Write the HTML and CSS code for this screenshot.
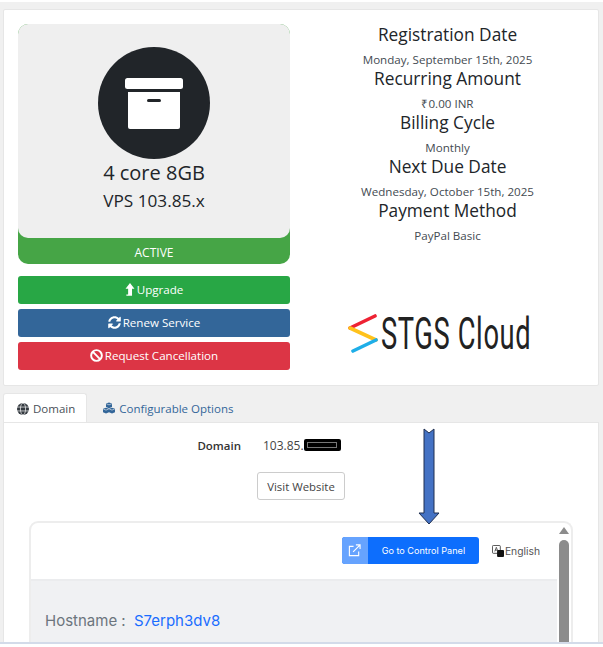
FILE: index.html
```html
<!DOCTYPE html>
<html lang="en">
<head>
<meta charset="utf-8">
<title>Service details</title>
<link rel="stylesheet" href="styles.css">
</head>
<body>
<div class="page">
  <div class="main">
    <section class="card">
      <div class="left">
        <div class="product">
          <div class="product-box">
            <div class="circle">
              <svg class="box-icon" viewBox="0 0 58 51" aria-hidden="true">
                <rect x="0" y="0" width="58" height="11" rx="2.5" fill="#fff"/>
                <path d="M3 14h52v35a2 2 0 0 1-2 2H5a2 2 0 0 1-2-2z" fill="#fff"/>
                <rect x="22" y="21" width="14" height="3" rx="1.5" fill="#212529"/>
              </svg>
            </div>
            <h3 class="product-name">4 core 8GB</h3>
            <h4 class="product-group">VPS 103.85.x</h4>
          </div>
          <div class="status">ACTIVE</div>
        </div>
        <div class="actions">
          <a class="btn btn-green">
            <svg class="ico ico-narrow" viewBox="1 0 11 16" aria-hidden="true"><path d="M6.500 0L12 7H9v8.800H2V14.200h2.200V7H1z" fill="#fff"/></svg>
            Upgrade
          </a>
          <a class="btn btn-blue">
            <svg class="ico" viewBox="0 0 512 512" aria-hidden="true"><path fill="#fff" d="M370.72 133.28C339.458 104.008 298.888 87.962 255.848 88c-77.458.068-144.328 53.178-162.791 126.85-1.344 5.363-6.122 9.15-11.651 9.15H24.103c-7.498 0-13.194-6.807-11.807-14.176C33.933 94.924 134.813 8 256 8c66.448 0 126.791 26.136 171.315 68.685L463.03 40.97C478.149 25.851 504 36.559 504 57.941V192c0 13.255-10.745 24-24 24H345.941c-21.382 0-32.09-25.851-16.971-40.971l41.75-41.749zM32 296h134.059c21.382 0 32.09 25.851 16.971 40.971l-41.75 41.75c31.262 29.273 71.835 45.319 114.876 45.28 77.418-.07 144.315-53.144 162.787-126.849 1.344-5.363 6.122-9.15 11.651-9.15h57.304c7.498 0 13.194 6.807 11.807 14.176C478.067 417.076 377.187 504 256 504c-66.448 0-126.791-26.136-171.315-68.685L48.97 471.03C33.851 486.149 8 475.441 8 454.059V320c0-13.255 10.745-24 24-24z"/></svg>
            Renew Service
          </a>
          <a class="btn btn-red">
            <svg class="ico" viewBox="0 0 16 16" aria-hidden="true"><circle cx="8" cy="8" r="6.600" fill="none" stroke="#fff" stroke-width="2.400"/><path d="M3.600 3.600l8.800 8.800" stroke="#fff" stroke-width="2.400"/></svg>
            Request Cancellation
          </a>
        </div>
      </div>
      <div class="right">
        <div class="fact"><h4>Registration Date</h4><p>Monday, September 15th, 2025</p></div>
        <div class="fact"><h4>Recurring Amount</h4><p>₹0.00 INR</p></div>
        <div class="fact"><h4>Billing Cycle</h4><p>Monthly</p></div>
        <div class="fact"><h4>Next Due Date</h4><p>Wednesday, October 15th, 2025</p></div>
        <div class="fact"><h4>Payment Method</h4><p>PayPal Basic</p></div>
        <div class="logo">
          <svg class="logo-mark" viewBox="0 0 30 40" aria-hidden="true">
            <path d="M2 14L27 2" stroke="#ee2233" stroke-width="3.600" stroke-linecap="round"/>
            <path d="M2 14L28 26" stroke="#ffc21c" stroke-width="3.600" stroke-linecap="round"/>
            <path d="M28 26L5 37" stroke="#1eaee8" stroke-width="3.600" stroke-linecap="round"/>
          </svg>
          <span class="logo-text">STGS Cloud</span>
        </div>
      </div>
    </section>

    <nav class="tabs">
      <a class="tab tab-active">
        <svg class="tab-ico" viewBox="0 0 16 16" aria-hidden="true"><circle cx="8" cy="8" r="8" fill="#343a40"/><g fill="none" stroke="#fff" stroke-width=".9"><ellipse cx="8" cy="8" rx="3.400" ry="8"/><path d="M0 5.400h16M0 10.600h16"/></g></svg>
        Domain
      </a>
      <a class="tab tab-options">
        <svg class="tab-ico" viewBox="0 0 16 16" aria-hidden="true"><g fill="#336699"><path d="M8 .5l4 1.500v4.600L8 8.200 4 6.600V2z"/><path d="M4 7.500l4 1.500v4.600L4 15.200 0 13.600V9z"/><path d="M12 7.500l4 1.500v4.600l-4 1.600-4-1.600V9z"/></g><g fill="none" stroke="#f0f0f0" stroke-width=".8"><path d="M4.400 2.400L8 3.800l3.600-1.400M.4 9.400L4 10.800l3.600-1.400M8.400 9.400l3.600 1.400 3.600-1.400"/></g></svg>
        Configurable Options
      </a>
    </nav>

    <section class="pane">
      <div class="domain-row">
        <span class="domain-label">Domain</span>
        <span class="domain-value">103.85.<span class="redacted"><span class="redacted-line"></span></span></span>
      </div>
      <a class="visit">Visit Website</a>

      <div class="frame">
        <div class="frame-body">
          <header class="frame-head">
            <a class="panel-btn">
              <span class="panel-ico">
                <svg viewBox="0 0 14 14" width="13" height="13" aria-hidden="true"><g fill="none" stroke="#fff" stroke-width="1.200"><path d="M6 2.500H1.500v10h10V8"/><path d="M5.500 8.500L12.500 1.500M8.500 1h4.500v4.500"/></g></svg>
              </span>
              <span class="panel-label">Go to Control Panel</span>
            </a>
            <span class="lang">
              <svg class="lang-ico" viewBox="0 0 13 13" aria-hidden="true"><rect x=".5" y=".5" width="8.500" height="8.500" rx="1" fill="#fff" stroke="#333" stroke-width=".9"/><rect x="5.500" y="5.500" width="7.500" height="7.500" rx="1" fill="#111"/><path d="M3 7l1.700-4.500L6.400 7M3.600 5.600h2.200" fill="none" stroke="#333" stroke-width=".8"/></svg>English
            </span>
          </header>
          <div class="frame-content">
            <span class="host-label">Hostname :</span>
            <span class="host-value">S7erph3dv8</span>
          </div>
        </div>
        <div class="scrollbar">
          <span class="scroll-up"></span>
          <span class="scroll-thumb"></span>
        </div>
      </div>

      <svg class="arrow" viewBox="0 0 22 97" aria-hidden="true">
        <path d="M6 1l5 4 5-4v84h5L11 96 1 85h5z" fill="#4472c4" stroke="#1f2f50" stroke-width="1"/>
      </svg>
    </section>
  </div>
  <div class="bottom-strip"></div>
</div>
</body>
</html>
```

FILE: styles.css
```css
* { box-sizing: border-box; }
html, body { margin: 0; padding: 0; background: #fff; }
body { font-family: "Open Sans", "Liberation Sans", sans-serif; color: #212529; }
.page { width: 603px; height: 647px; display: flex; flex-direction: column; overflow: hidden; }
.main { flex: 1; min-height: 0; margin-top: 2px; padding: 7px 4px 0 3px; background: #f0f0f0; display: flex; flex-direction: column; overflow: hidden; }
.bottom-strip { height: 5px; background: #fff; border-top: 2px solid #d3dbe9; }

.card { height: 377px; flex: none; background: #fff; border: 1px solid #e6e6e6; border-radius: 2px; padding: 14px 8px 0 14px; display: flex; }
.left { width: 272px; flex: none; }
.right { flex: 1; padding-left: 15px; text-align: center; }

.product { background: #46a546; border-radius: 10px; height: 240px; }
.product-box { height: 214px; background: #efefef; border-radius: 10px; padding-top: 23px; text-align: center; }
.circle { width: 112px; height: 112px; margin: 0 auto; border-radius: 50%; background: #212529; display: flex; justify-content: center; align-items: flex-start; padding-top: 31px; }
.box-icon { width: 58px; height: 51px; display: block; }
.product-name { margin: 0; font-size: 20px; font-weight: 400; line-height: 28px; }
.product-group { margin: 0; font-size: 17.200px; font-weight: 400; line-height: 26px; padding-top: 1px; }
.status { height: 26px; line-height: 29px; text-align: center; color: #fff; font-size: 12px; }

.actions { margin-top: 12px; display: flex; flex-direction: column; gap: 5.500px; }
.btn { height: 27.500px; border-radius: 3px; color: #fff; font-size: 11.600px; display: flex; align-items: center; justify-content: center; gap: 2px; }
.btn-green { background: #28a745; }
.btn-blue { background: #336699; }
.btn-red { background: #dc3545; }
.ico { width: 13px; height: 13px; display: block; }
.ico-narrow { width: 10px; }

.fact h4 { margin: 0; font-size: 17.300px; font-weight: 400; line-height: 21px; }
.fact p { margin: 0; font-size: 11.600px; line-height: 15px; color: #444b52; padding-top: 7px; height: 23px; }
.logo { margin-top: 68px; padding-left: 43px; display: flex; align-items: center; height: 44px; gap: 3px; }
.logo-mark { width: 30px; height: 40px; flex: none; }
.logo-text { display: inline-block; width: 148px; font-family: "Roboto", sans-serif; font-weight: 400; font-size: 44px; line-height: 44px; color: #222; white-space: nowrap; transform: scaleX(.62); transform-origin: left center; letter-spacing: 1px; }

.tabs { height: 36px; flex: none; display: flex; align-items: flex-end; }
.tab { height: 29px; display: flex; align-items: center; gap: 4px; padding: 0 12px; font-size: 11.500px; color: #336699; border: 1px solid transparent; border-bottom: 0; }
.tab-active { background: #fff; border-color: #e6e6e6; border-radius: 3px 3px 0 0; color: #495057; margin-bottom: -1px; position: relative; height: 30px; padding: 0 11px 0 13px; }
.tab-options { padding-left: 15px; }
.tab-ico { width: 12px; height: 12px; display: block; }

.pane { flex: 1; min-height: 0; background: #fff; border: 1px solid #e6e6e6; border-bottom: 0; position: relative; display: flex; flex-direction: column; align-items: center; overflow: hidden; }
.domain-row { width: 100%; flex: none; display: flex; align-items: center; height: 20px; margin-top: 12px; font-size: 12px; }
.domain-label { width: 237px; text-align: right; font-weight: 600; font-size: 11.500px; color: #333; }
.domain-value { margin-left: 22px; color: #444; display: flex; align-items: center; }
.redacted { display: flex; align-items: center; justify-content: center; width: 37px; height: 12px; background: #000; border-radius: 2px; }
.redacted-line { display: block; width: 30px; height: 6px; border: 1px solid #777; }
.visit { flex: none; margin-top: 17px; height: 28px; width: 88px; display: flex; align-items: center; justify-content: center; background: #fff; border: 1px solid #ccc; border-radius: 3px; font-size: 11.400px; color: #444; }

.frame { margin-top: 21px; align-self: flex-start; margin-left: 25px; width: 544px; height: 160px; flex: none; background: #fff; border: 2px solid #ededed; border-bottom: 0; border-radius: 9px 9px 0 0; display: flex; }
.frame-body { width: 526px; flex: none; display: flex; flex-direction: column; }
.frame-head { height: 58px; flex: none; display: flex; align-items: flex-start; justify-content: flex-end; padding: 14px 17px 0 0; border-bottom: 2px solid #ebecee; gap: 13px; }
.panel-btn { height: 27px; width: 137px; display: flex; background: #0d6efd; border-radius: 3px; overflow: hidden; font-family: "Inter", sans-serif; font-size: 9.100px; color: #fff; align-items: stretch; }
.panel-ico { width: 26px; background: #66a3fe; display: flex; align-items: center; justify-content: center; }
.panel-label { flex: 1; display: flex; align-items: center; justify-content: center; }
.lang { display: flex; align-items: center; height: 27px; font-family: "Inter", sans-serif; font-size: 10.300px; color: #555; }
.lang-ico { width: 12px; height: 12px; display: block; margin-right: 1px; }
.frame-content { flex: 1; background: #f0f1f3; padding: 30px 0 0 14px; font-family: "Inter", sans-serif; font-size: 15px; line-height: 20px; }
.host-label { color: #6c757d; margin-right: 4px; }
.host-value { color: #1a6dff; }

.scrollbar { flex: 1; display: flex; flex-direction: column; align-items: center; padding: 4px 0 0; }
.scroll-up { width: 0; height: 0; border-left: 5px solid transparent; border-right: 5px solid transparent; border-bottom: 7px solid #8c8c8c; }
.scroll-thumb { width: 10px; flex: 1; margin-top: 6px; background: #8c8c8c; border-radius: 5px 5px 0 0; }

.arrow { position: absolute; left: 414px; top: 5px; width: 22px; height: 97px; }
```
